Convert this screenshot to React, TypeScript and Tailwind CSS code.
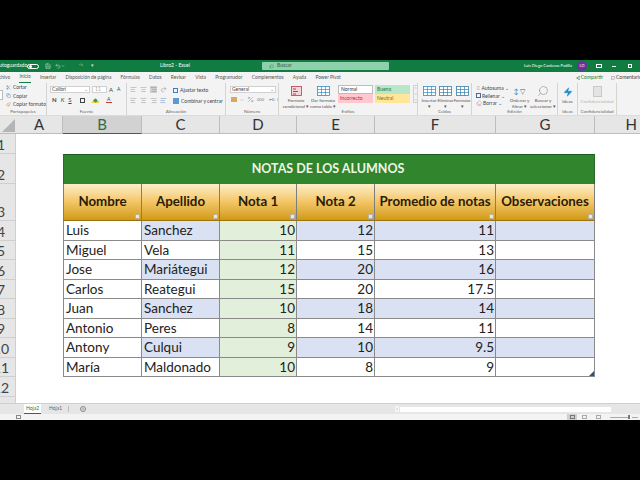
import { ReactNode } from "react";
import {
  AlignCenter,
  AlignLeft,
  AlignRight,
  ChevronDown,
  ChevronUp,
  Copy,
  Eraser,
  MessageSquare,
  Paintbrush,
  Percent,
  Plus,
  Redo2,
  Save,
  Scissors,
  Search,
  Share2,
  Sigma,
  Undo2,
  Zap,
} from "lucide-react";

const columns = ["A", "B", "C", "D", "E", "F", "G", "H"];
const headers = ["Nombre", "Apellido", "Nota 1", "Nota 2", "Promedio de notas", "Observaciones"];
const rows = [
  ["Luis", "Sanchez", "10", "12", "11"],
  ["Miguel", "Vela", "11", "15", "13"],
  ["Jose", "Mariátegui", "12", "20", "16"],
  ["Carlos", "Reategui", "15", "20", "17.5"],
  ["Juan", "Sanchez", "10", "18", "14"],
  ["Antonio", "Peres", "8", "14", "11"],
  ["Antony", "Culqui", "9", "10", "9.5"],
  ["María", "Maldonado", "10", "8", "9"],
];
const tabs = [
  "Archivo",
  "Inicio",
  "Insertar",
  "Disposición de página",
  "Fórmulas",
  "Datos",
  "Revisar",
  "Vista",
  "Programador",
  "Complementos",
  "Ayuda",
  "Power Pivot",
];

function Group({ width, label, children }: { width: string; label: string; children: ReactNode }) {
  return (
    <div className={`${width} h-full flex flex-col border-r border-[#d4d4d4] shrink-0 overflow-hidden`}>
      <div className="flex-1 min-h-0 flex">{children}</div>
      <div className="h-[6px] leading-[6px] text-center text-[4.5px] text-[#666]">{label}</div>
    </div>
  );
}

function BigButton({
  lines,
  children,
  w = "w-[19px]",
  muted = false,
}: {
  lines: string[];
  children: ReactNode;
  w?: string;
  muted?: boolean;
}) {
  return (
    <div className={`${w} flex flex-col items-center pt-[2px] shrink-0`}>
      <div className="h-[13px] flex items-center justify-center">{children}</div>
      <div
        className={`mt-[1px] text-[4.5px] leading-[5.5px] text-center whitespace-nowrap ${
          muted ? "text-[#b5b5b5]" : "text-[#555]"
        }`}
      >
        {lines.map((l) => (
          <div key={l}>{l}</div>
        ))}
      </div>
    </div>
  );
}

function TableIcon({ color = "#2f8fc8" }: { color?: string }) {
  return (
    <svg width="13" height="10" viewBox="0 0 13 10">
      <rect x="0.5" y="0.5" width="12" height="9" fill="#fff" stroke={color} strokeWidth="0.8" />
      <path d="M0.5 3.5h12M0.5 6.5h12M4.5 0.5v9M8.5 0.5v9" stroke={color} strokeWidth="0.7" />
    </svg>
  );
}

function Ribbon() {
  return (
    <div className="h-[33px] bg-[#f3f3f3] flex text-[5px] text-[#444] border-b border-[#dcdcdc]">
      <Group width="w-[47px]" label="Portapapeles">
        <div className="w-[7px] -ml-[3px] mt-[7px] h-[10px] border border-[#bbb] bg-white" />
        <div className="ml-[3px] flex flex-col gap-[2.5px] pt-[1px] whitespace-nowrap leading-[6px]">
          <div className="flex items-center gap-[2px]">
            <Scissors className="w-[5px] h-[5px] text-[#3b6ea5]" strokeWidth={1.5} />
            Cortar
          </div>
          <div className="flex items-center gap-[2px]">
            <Copy className="w-[5px] h-[5px] text-[#3b6ea5]" strokeWidth={1.5} />
            Copiar
          </div>
          <div className="flex items-center gap-[2px]">
            <Paintbrush className="w-[5px] h-[5px] text-[#c9772f]" strokeWidth={1.5} />
            Copiar formato
          </div>
        </div>
      </Group>

      <Group width="w-[80px]" label="Fuente">
        <div className="pl-[3px] pt-[3px] flex flex-col gap-[3px]">
          <div className="flex items-center gap-[2px]">
            <div className="w-[40px] h-[7px] bg-white border border-[#d0d0d0] leading-[5px] pl-[1px] flex justify-between pr-[1px]">
              Calibri
              <span className="text-[#777]">⌄</span>
            </div>
            <div className="w-[15px] h-[7px] bg-white border border-[#d0d0d0] leading-[5px] text-[#aaa] pl-[2px]">
              11
            </div>
            <span className="text-[6px] leading-[7px]">A</span>
            <span className="text-[5px] leading-[7px] ml-[2px]">A</span>
          </div>
          <div className="flex items-center gap-[4px] text-[6px] leading-[8px] pl-[2px]">
            <b>N</b>
            <i>K</i>
            <u>S</u>
            <div className="w-[5px] h-[5px] border border-[#444] ml-[4px]" />
            <div className="w-[7px] h-[6px] border-b-2 border-[#f4d03f] ml-[3px] text-[#3a9a4a] leading-[5px] text-center">◆</div>
            <div className="w-[6px] border-b border-[#c03a2b] leading-[5px] text-center text-[5px] ml-[3px]">A</div>
          </div>
        </div>
      </Group>

      <Group width="w-[99px]" label="Alineación">
        <div className="pl-[3px] pt-[3px] flex gap-[5px]">
          <div className="grid grid-cols-4 grid-rows-2 gap-x-[2px] gap-y-[3px] w-[38px] h-[18px] text-[#777]">
            <AlignLeft className="w-[7px] h-[7px]" strokeWidth={1.3} />
            <AlignCenter className="w-[7px] h-[7px]" strokeWidth={1.3} />
            <AlignRight className="w-[7px] h-[7px] bg-[#d0d0d0]" strokeWidth={1.3} />
            <Redo2 className="w-[7px] h-[7px]" strokeWidth={1.3} />
            <AlignLeft className="w-[7px] h-[7px]" strokeWidth={1.3} />
            <AlignCenter className="w-[7px] h-[7px]" strokeWidth={1.3} />
            <AlignRight className="w-[7px] h-[7px]" strokeWidth={1.3} />
            <AlignLeft className="w-[7px] h-[7px] text-[#3b6ea5]" strokeWidth={1.3} />
          </div>
          <div className="flex flex-col gap-[5px] whitespace-nowrap leading-[6px] pt-[1px]">
            <div className="flex items-center gap-[2px]">
              <div className="w-[5px] h-[5px] border border-[#3b80c0]" />
              Ajustar texto
            </div>
            <div className="flex items-center gap-[2px]">
              <div className="w-[6px] h-[6px] bg-[#5a9ad0]" />
              Combinar y centrar
              <ChevronDown className="w-[4px] h-[4px] ml-[1px]" />
            </div>
          </div>
        </div>
      </Group>

      <Group width="w-[53px]" label="Número">
        <div className="pl-[4px] pt-[3px] flex flex-col gap-[3px]">
          <div className="w-[46px] h-[7px] bg-white border border-[#d0d0d0] leading-[5px] pl-[1px] flex justify-between pr-[1px]">
            General
            <span className="text-[#777]">⌄</span>
          </div>
          <div className="flex items-center gap-[3px] pl-[1px] text-[#777]">
            <div className="w-[6px] h-[5px] bg-[#d9a860]" />
            <ChevronDown className="w-[4px] h-[4px]" />
            <Percent className="w-[7px] h-[7px]" strokeWidth={1.3} />
            <span className="text-[4px]">000</span>
            <span className="ml-[2px] text-[4px] text-[#3b6ea5]">⇤0</span>
            <span className="text-[4px] text-[#3b6ea5]">0⇥</span>
          </div>
        </div>
      </Group>

      <Group width="w-[139px]" label="Estilos">
        <div className="flex gap-[2px] pl-[5px]">
          <BigButton w="w-[24px]" lines={["Formato", "condicional ▾"]}>
            <svg width="11" height="10" viewBox="0 0 11 10">
              <rect x="0.5" y="0.5" width="10" height="9" fill="#f4d7da" stroke="#b5404f" strokeWidth="0.8" />
              <path d="M2 3h3M2 5.5h5M2 8h3" stroke="#b5404f" strokeWidth="1.2" />
            </svg>
          </BigButton>
          <BigButton w="w-[26px]" lines={["Dar formato", "como tabla ▾"]}>
            <TableIcon />
          </BigButton>
          <div className="pt-[2px] grid grid-cols-[35px_35px] grid-rows-[9px_9px] gap-x-[2px] gap-y-0 text-[5px] leading-[8px]">
            <div className="bg-white border border-[#bdbdbd] pl-[2px] leading-[7px] text-[#333]">Normal</div>
            <div className="bg-[#b8e6c8] pl-[2px] text-[#2a7a3a]">Bueno</div>
            <div className="bg-[#ffc7ce] pl-[2px] text-[#b5303f]">Incorrecto</div>
            <div className="bg-[#ffe699] pl-[2px] text-[#8a6a10]">Neutral</div>
          </div>
          <div className="ml-[1px] mt-[2px] w-[5px] h-[18px] border border-[#d0d0d0] flex flex-col items-center justify-between text-[#777]">
            <ChevronUp className="w-[4px] h-[4px]" />
            <ChevronDown className="w-[4px] h-[4px]" />
            <ChevronDown className="w-[4px] h-[4px]" />
          </div>
        </div>
      </Group>

      <Group width="w-[54px]" label="Celdas">
        <div className="flex pl-[3px]">
          <BigButton w="w-[16px]" lines={["Insertar", "▾"]}>
            <TableIcon />
          </BigButton>
          <BigButton w="w-[17px]" lines={["Eliminar", "▾"]}>
            <TableIcon color="#3a7fa8" />
          </BigButton>
          <BigButton w="w-[16px]" lines={["Formato", "▾"]}>
            <TableIcon color="#3a7fa8" />
          </BigButton>
        </div>
      </Group>

      <Group width="w-[86px]" label="Edición">
        <div className="flex pl-[4px]">
          <div className="flex flex-col gap-[1.5px] pt-[2px] w-[33px] whitespace-nowrap leading-[6px]">
            <div className="flex items-center gap-[1px]">
              <Sigma className="w-[6px] h-[6px]" strokeWidth={1.2} />
              Autosuma ⌄
            </div>
            <div className="flex items-center gap-[1px]">
              <div className="w-[5px] h-[5px] border border-[#3b6ea5]" />
              Rellenar ⌄
            </div>
            <div className="flex items-center gap-[1px]">
              <Eraser className="w-[6px] h-[6px] text-[#c25aa0]" strokeWidth={1.4} />
              Borrar ⌄
            </div>
          </div>
          <BigButton w="w-[21px]" lines={["Ordenar y", "filtrar ▾"]}>
            <span className="text-[7px] tracking-[1px] text-[#555]">
              <span className="text-[#3b80c0]">↕</span>▽
            </span>
          </BigButton>
          <BigButton w="w-[26px]" lines={["Buscar y", "seleccionar ▾"]}>
            <Search className="w-[12px] h-[12px] -scale-x-100 text-[#777]" strokeWidth={1} />
          </BigButton>
        </div>
      </Group>

      <Group width="w-[20px]" label="Ideas">
        <BigButton w="w-full" lines={["Ideas"]}>
          <Zap className="w-[10px] h-[12px] text-[#1f8ad0] fill-[#1f8ad0]" strokeWidth={1} />
        </BigButton>
      </Group>

      <Group width="w-[39px]" label="Confidencialidad">
        <BigButton w="w-full" muted lines={["Confidencialidad"]}>
          <div className="w-[9px] h-[11px] bg-[#e4e4e4] border border-[#c8c8c8]" />
        </BigButton>
      </Group>
    </div>
  );
}

function RowHead({ n }: { n: number }) {
  return (
    <div className="bg-[#e6e6e6] border-b border-r border-[#cfcfcf] overflow-hidden flex items-end text-[14px] leading-[17px] text-[#444]">
      <div className="w-[2px] flex justify-center whitespace-nowrap">{n}</div>
    </div>
  );
}

function Sheet() {
  return (
    <div className="h-[287px] overflow-hidden bg-white grid grid-cols-[16px_47px_79px_78px_77px_78px_121px_99px_45px] grid-rows-[18px_20px_30px_37px_repeat(8,19.5px)_20px_20px] font-['Lato',sans-serif]">
      {/* Column headers */}
      <div className="bg-[#e6e6e6] border-b border-[#bdbdbd] flex items-end justify-end pr-[1px] pb-[1px]">
        <svg width="13" height="13" viewBox="0 0 13 13">
          <path d="M13 0V13H0Z" fill="#b4b4b4" />
        </svg>
      </div>
      {columns.map((c) => (
        <div
          key={c}
          className={
            c === "B"
              ? "bg-[#d2d2d2] border-b border-[#217346] border-r border-r-[#bdbdbd] flex items-center justify-center text-[15px] text-[#2f6b4a]"
              : c === "H"
                ? "bg-[#e6e6e6] border-b border-[#bdbdbd] flex items-center justify-end pr-[3px] text-[15px] text-[#333]"
                : "bg-[#e6e6e6] border-b border-[#bdbdbd] border-r flex items-center justify-center text-[15px] text-[#333]"
          }
        >
          {c}
        </div>
      ))}

      <RowHead n={1} />
      <div className="col-span-8" />

      <RowHead n={2} />
      <div />
      <div className="col-span-6 bg-[#31852d] border-t border-t-[#1d5a1d] border-r border-l border-[#2a6a2a] flex items-center justify-center pr-[2px] text-[12.5px] font-bold text-[#eef6e6]">
        NOTAS DE LOS ALUMNOS
      </div>
      <div />

      <RowHead n={3} />
      <div />
      {headers.map((h, i) => (
        <div
          key={h}
          className={`${i === 0 ? "border-l" : ""} relative bg-gradient-to-b from-[#fdeec9] via-[#f3c563] via-50% to-[#d19a06] border-r border-[#7d7d7d] border-b border-b-[#9a7410] flex items-center justify-center pb-[1px] text-[13.3px] font-bold text-[#2a1c05] whitespace-nowrap`}
        >
          {h}
          <div className="absolute right-[1px] bottom-[1px] w-[5px] h-[5px] bg-[#ece8df] border border-[#b9b2a0]" />
        </div>
      ))}
      <div />

      {rows.map((r, i) => {
        const band = i % 2 === 0 ? "bg-[#d9e1f2]" : "bg-white";
        const cell = "border-r border-b border-[#8a8a8a] flex items-center text-[13.5px] text-[#222] overflow-hidden";
        return [
          <RowHead key={`h${i}`} n={i + 4} />,
          <div key={`a${i}`} />,
          <div key={`b${i}`} className={`${cell} border-l bg-white pl-[2px]`}>{r[0]}</div>,
          <div key={`c${i}`} className={`${cell} ${band} pl-[2px]`}>{r[1]}</div>,
          <div key={`d${i}`} className={`${cell} bg-[#e2efda] justify-end pr-[1px]`}>{r[2]}</div>,
          <div key={`e${i}`} className={`${cell} ${band} justify-end pr-[1px]`}>{r[3]}</div>,
          <div key={`f${i}`} className={`${cell} ${band} justify-end pr-[1px]`}>{r[4]}</div>,
          <div key={`g${i}`} className={`${cell} ${band} relative`}>
            {i === 7 && (
              <svg className="absolute right-0 bottom-0" width="5" height="5" viewBox="0 0 5 5">
                <path d="M5 0V5H0Z" fill="#2b4f8f" />
              </svg>
            )}
          </div>,
          <div key={`x${i}`} />,
        ];
      })}

      <RowHead n={12} />
      <div className="col-span-8" />
      <RowHead n={13} />
      <div className="col-span-8" />
    </div>
  );
}

export default function App() {
  return (
    <div className="w-[640px] h-[480px] bg-black flex flex-col overflow-hidden font-['Lato',sans-serif]">
      <div className="h-[60px] shrink-0" />

      {/* Title bar */}
      <div className="h-[12px] shrink-0 bg-[#107c41] flex items-center text-[5px] text-white whitespace-nowrap">
        <div className="w-[160px] flex items-center">
          <span className="-ml-[4px] w-[31px]">Autoguardado</span>
          <div className="w-[12px] h-[5px] rounded-full border border-white flex items-center pl-[1px]">
            <div className="w-[3px] h-[3px] rounded-full bg-white" />
          </div>
          <Save className="w-[6px] h-[6px] ml-[6px]" strokeWidth={1.5} />
          <Undo2 className="w-[6px] h-[6px] ml-[4px]" strokeWidth={1.5} />
          <ChevronDown className="w-[4px] h-[4px]" />
          <span className="ml-[14px] text-[#7dbb98]">↷</span>
          <span className="ml-[8px] text-[#cfe6d8]">▾</span>
        </div>
        <span className="w-[102px]">Libro2 - Excel</span>
        <div className="w-[127px] h-[8px] rounded-[1px] bg-[#8fd0ac] flex items-center pl-[7px] text-[#2f5f45]">
          <Search className="w-[5px] h-[5px] -scale-x-100" strokeWidth={1.5} />
          <span className="ml-[3px]">Buscar</span>
        </div>
        <div className="flex-1 flex items-center justify-end pr-[8px]">
          <span className="text-[4px]">Luis Diego Cardenas Padilla</span>
          <div className="ml-[5px] w-[10px] h-[10px] rounded-full bg-[#6b2fa0] flex items-center justify-center text-[4px]">LD</div>
          <div className="ml-[9px] w-[6px] h-[4px] border border-white" />
          <div className="ml-[10px] w-[4px] h-[1px] bg-white" />
          <div className="ml-[12px] w-[4px] h-[4px] border border-white" />
        </div>
      </div>

      {/* Tabs */}
      <div className="h-[11px] shrink-0 bg-[#f3f3f3] flex items-center text-[4.8px] text-[#555] whitespace-nowrap">
        <div className="-ml-[6px] flex items-center gap-[9.3px] h-full">
          {tabs.map((t) => (
            <div
              key={t}
              className={
                t === "Inicio"
                  ? "h-full flex items-center border-b border-[#107c41] text-[#107c41]"
                  : "h-full flex items-center"
              }
            >
              {t}
            </div>
          ))}
        </div>
        <div className="ml-auto flex items-center gap-[8px] text-[#107c41] text-[5px]">
          <div className="flex items-center gap-[1px]">
            <Share2 className="w-[4px] h-[4px]" />
            Compartir
          </div>
          <div className="flex items-center gap-[1px] text-[#444] -mr-[4px]">
            <MessageSquare className="w-[4px] h-[4px]" />
            Comentarios
          </div>
        </div>
      </div>

      <Ribbon />
      <Sheet />

      {/* Sheet tabs */}
      <div className="h-[11px] shrink-0 bg-[#e6e6e6] border-t border-[#cfcfcf] flex items-center text-[5px] text-[#666]">
        <div className="ml-[24px] w-[17px] h-full bg-white border-b border-[#107c41] text-[#107c41] flex items-center justify-center">
          Hoja2
        </div>
        <span className="ml-[8px]">Hoja1</span>
        <div className="ml-[6px] w-px h-[6px] bg-[#bbb]" />
        <div className="ml-[11px] w-[6px] h-[6px] rounded-full border border-[#888] flex items-center justify-center">
          <Plus className="w-[4px] h-[4px]" />
        </div>
        <div className="ml-auto w-[4px] h-[6px] bg-[#f4f4f4] text-[4px] leading-[6px] text-center">‹</div>
        <div className="ml-[1px] mr-[29px] w-[211px] h-[5px] bg-white" />
      </div>

      {/* Status bar */}
      <div className="h-[6px] shrink-0 bg-[#f3f3f3] flex items-center">
        <div className="ml-[16px] w-[5px] h-[4px] border border-[#888]" />
        <div className="ml-auto w-[10px] h-full bg-[#cfcfcf] flex items-center justify-center">
          <div className="w-[5px] h-[4px] border border-[#777]" />
        </div>
        <div className="ml-[5px] w-[5px] h-[4px] border border-[#aaa]" />
        <div className="ml-[9px] w-[5px] h-[4px] border border-[#aaa]" />
        <div className="ml-[9px] w-[18px] h-px bg-[#aaa]" />
        <div className="w-[2px] h-[4px] bg-[#777]" />
        <div className="ml-[2px] mr-[2px] w-[6px] h-px bg-[#aaa]" />
      </div>

      <div className="flex-1 bg-black" />
    </div>
  );
}
